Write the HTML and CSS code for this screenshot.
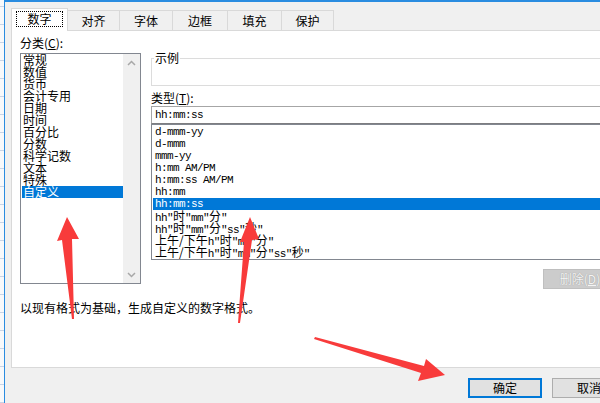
FILE: index.html
```html
<!DOCTYPE html>
<html lang="zh-CN">
<head>
<meta charset="utf-8">
<title>设置单元格格式</title>
<link rel="stylesheet" href="styles.css">
</head>
<body>
<div class="sheet-edge"></div>
<div class="dialog">
  <div class="tabs">
    <div class="tab active"><span class="focus">数字</span></div>
    <div class="tab">对齐</div>
    <div class="tab">字体</div>
    <div class="tab">边框</div>
    <div class="tab">填充</div>
    <div class="tab">保护</div>
  </div>
  <div class="panel">
    <div class="cols">
      <div class="cat">
        <div class="lbl">分类(<u>C</u>):</div>
        <div class="catbox">
          <ul class="catlist">
            <li>常规</li>
            <li>数值</li>
            <li>货币</li>
            <li>会计专用</li>
            <li>日期</li>
            <li>时间</li>
            <li>百分比</li>
            <li>分数</li>
            <li>科学记数</li>
            <li>文本</li>
            <li>特殊</li>
            <li class="sel">自定义</li>
          </ul>
          <div class="vscroll">
            <span class="sb-btn"><svg width="9" height="6" viewBox="0 0 9 6"><path d="M1 5L4.5 1.5L8 5" fill="none" stroke="#a8a8a8" stroke-width="1.5"/></svg></span>
            <span class="sb-btn"><svg width="9" height="6" viewBox="0 0 9 6"><path d="M1 1L4.5 4.5L8 1" fill="none" stroke="#a8a8a8" stroke-width="1.5"/></svg></span>
          </div>
        </div>
      </div>
      <div class="fmt">
        <div class="sample"><span class="legend">示例</span></div>
        <div class="lbl type-lbl">类型(<u>T</u>):</div>
        <div class="input">hh:mm:ss</div>
        <ul class="fmtlist">
          <li>d-mmm-yy</li>
          <li>d-mmm</li>
          <li>mmm-yy</li>
          <li>h:mm AM/PM</li>
          <li>h:mm:ss AM/PM</li>
          <li>hh:mm</li>
          <li class="sel">hh:mm:ss</li>
          <li>hh"<span class="cj">时</span>"mm"<span class="cj">分</span>"</li>
          <li>hh"<span class="cj">时</span>"mm"<span class="cj">分</span>"ss"<span class="cj">秒</span>"</li>
          <li><span class="cj">上午/下午</span>h"<span class="cj">时</span>"mm"<span class="cj">分</span>"</li>
          <li><span class="cj">上午/下午</span>h"<span class="cj">时</span>"mm"<span class="cj">分</span>"ss"<span class="cj">秒</span>"</li>
        </ul>
        <div class="delete">删除(<u>D</u>)</div>
      </div>
    </div>
    <p class="desc">以现有格式为基础，生成自定义的数字格式。</p>
  </div>
  <div class="footer">
    <button class="btn default">确定</button>
    <button class="btn">取消</button>
  </div>
</div>
<svg class="arrows" width="600" height="403" viewBox="0 0 600 403">
  <polygon points="67,217 79,239 72,239 74,319 72,319 62,240 57,241" fill="#f83b3b"/>
  <polygon points="250,217 259,239 252,240 240,323 238,323 244,242 240,242" fill="#f83b3b"/>
  <polygon points="315,337 424,366 426,359 445,375 418,381 421,373 314,339" fill="#f83b3b"/>
</svg>
</body>
</html>
```

FILE: styles.css
```css
html, body {
  margin: 0;
  padding: 0;
}

body {
  width: 600px;
  height: 403px;
  overflow: hidden;
  display: flex;
  position: relative;
  background: #fff;
  font-family: "Noto Sans CJK SC", "Liberation Sans", sans-serif;
  font-size: 12px;
  color: #000;
}

.sheet-edge {
  flex: none;
  width: 4px;
  background: repeating-linear-gradient(to bottom, #f8f9fb 0 6px, #c9d4e6 6px 7px, #f8f9fb 7px 18px);
}

.dialog {
  flex: none;
  width: 632px;
  height: 403px;
  box-sizing: border-box;
  background: #f0f0f0;
  border-left: 1px solid #2a8ce0;
  border-top: 2px solid #2a8ce0;
  padding-left: 6px;
  display: flex;
  flex-direction: column;
}

/* tabs */
.tabs {
  flex: none;
  height: 28px;
  display: flex;
  align-items: flex-end;
}

.tab {
  box-sizing: border-box;
  height: 20px;
  border: 1px solid #d9d9d9;
  border-left: none;
  border-bottom: none;
  display: flex;
  align-items: center;
  justify-content: center;
  line-height: 14px;
}

.tab.active {
  width: 57px;
  height: 23px;
  margin-bottom: -1px;
  background: #fff;
  border-left: 1px solid #d9d9d9;
  position: relative;
  z-index: 1;
}

.tab:nth-child(2) { width: 52px; }
.tab:nth-child(3) { width: 53px; }
.tab:nth-child(4) { width: 55px; }
.tab:nth-child(5) { width: 54px; }
.tab:nth-child(6) { width: 52px; }

.focus {
  display: block;
  box-sizing: border-box;
  width: 47px;
  height: 16px;
  margin-top: -2px;
  border: 1px dotted #000;
  text-align: center;
  line-height: 14px;
}

/* panel */
.panel {
  flex: none;
  box-sizing: border-box;
  width: 616px;
  height: 338px;
  background: #fff;
  border: 1px solid #d9d9d9;
  padding: 5px 0 0 8px;
}

.cols {
  display: flex;
  align-items: flex-start;
  gap: 10px;
}

.lbl {
  height: 14px;
  line-height: 14px;
  white-space: nowrap;
}

.cat {
  flex: none;
  width: 121px;
}

.catbox {
  margin-top: 3px;
  height: 231px;
  box-sizing: border-box;
  border: 1px solid #828790;
  display: flex;
}

.catlist {
  flex: 1;
  margin: 0;
  padding: 0 0 0 1px;
  list-style: none;
}

.catlist li {
  height: 12px;
  line-height: 12px;
  padding-left: 1px;
  white-space: nowrap;
}

.catlist li.sel {
  background: #0078d7;
  color: #fff;
}

.vscroll {
  flex: none;
  width: 17px;
  background: #f0f0f0;
  display: flex;
  flex-direction: column;
  justify-content: space-between;
}

.sb-btn {
  height: 17px;
  display: flex;
  align-items: center;
  justify-content: center;
}

.fmt {
  flex: none;
  width: 466px;
  display: flex;
  flex-direction: column;
}

.sample {
  margin-top: 22px;
  height: 28px;
  box-sizing: border-box;
  border: 1px solid #dcdcdc;
}

.legend {
  display: block;
  width: max-content;
  margin: -8px 0 0 2px;
  padding: 0 1px;
  background: #fff;
  line-height: 14px;
}

.type-lbl {
  margin-top: 5px;
}

.input {
  margin-top: 1px;
  height: 18px;
  box-sizing: border-box;
  border: 1px solid #a6a6a6;
  border-bottom-color: #7d7d80;
  padding-left: 3px;
  line-height: 16px;
  font-family: "Liberation Mono", monospace;
  font-size: 11px;
  letter-spacing: -0.6px;
}

.fmtlist {
  height: 136px;
  box-sizing: border-box;
  margin: 0;
  padding: 1px 0 0 1px;
  list-style: none;
  border: 1px solid #828790;
}

.fmtlist li {
  height: 12px;
  line-height: 12px;
  padding-left: 2px;
  white-space: nowrap;
  font-family: "Liberation Mono", monospace;
  font-size: 11px;
  letter-spacing: -0.6px;
}

.fmtlist li.sel {
  background: #0078d7;
  color: #fff;
}

.cj {
  font-family: "Noto Sans CJK SC", sans-serif;
  font-size: 12px;
  letter-spacing: 0;
}

.delete {
  align-self: flex-end;
  margin-top: 9px;
  width: 74px;
  height: 20px;
  box-sizing: border-box;
  background: #cccccc;
  border: 1px solid #bfbfbf;
  text-align: center;
  line-height: 18px;
  color: #f4f4f4;
  text-shadow: 0 0 1px #8c8c8c;
}

.desc {
  margin: 12px 0 0;
  line-height: 14px;
}

/* footer */
.footer {
  flex: 1;
  display: flex;
  align-items: flex-start;
  gap: 10px;
  padding: 10px 0 0 457px;
}

.btn {
  flex: none;
  box-sizing: border-box;
  width: 74px;
  height: 20px;
  margin: 0;
  padding: 0;
  background: #e1e1e1;
  border: 1px solid #adadad;
  font-family: "Noto Sans CJK SC", sans-serif;
  font-size: 12px;
  line-height: 16px;
  color: #000;
}

.btn.default {
  border: 2px solid #0078d7;
}

.arrows {
  position: absolute;
  left: 0;
  top: 0;
  pointer-events: none;
}
```
